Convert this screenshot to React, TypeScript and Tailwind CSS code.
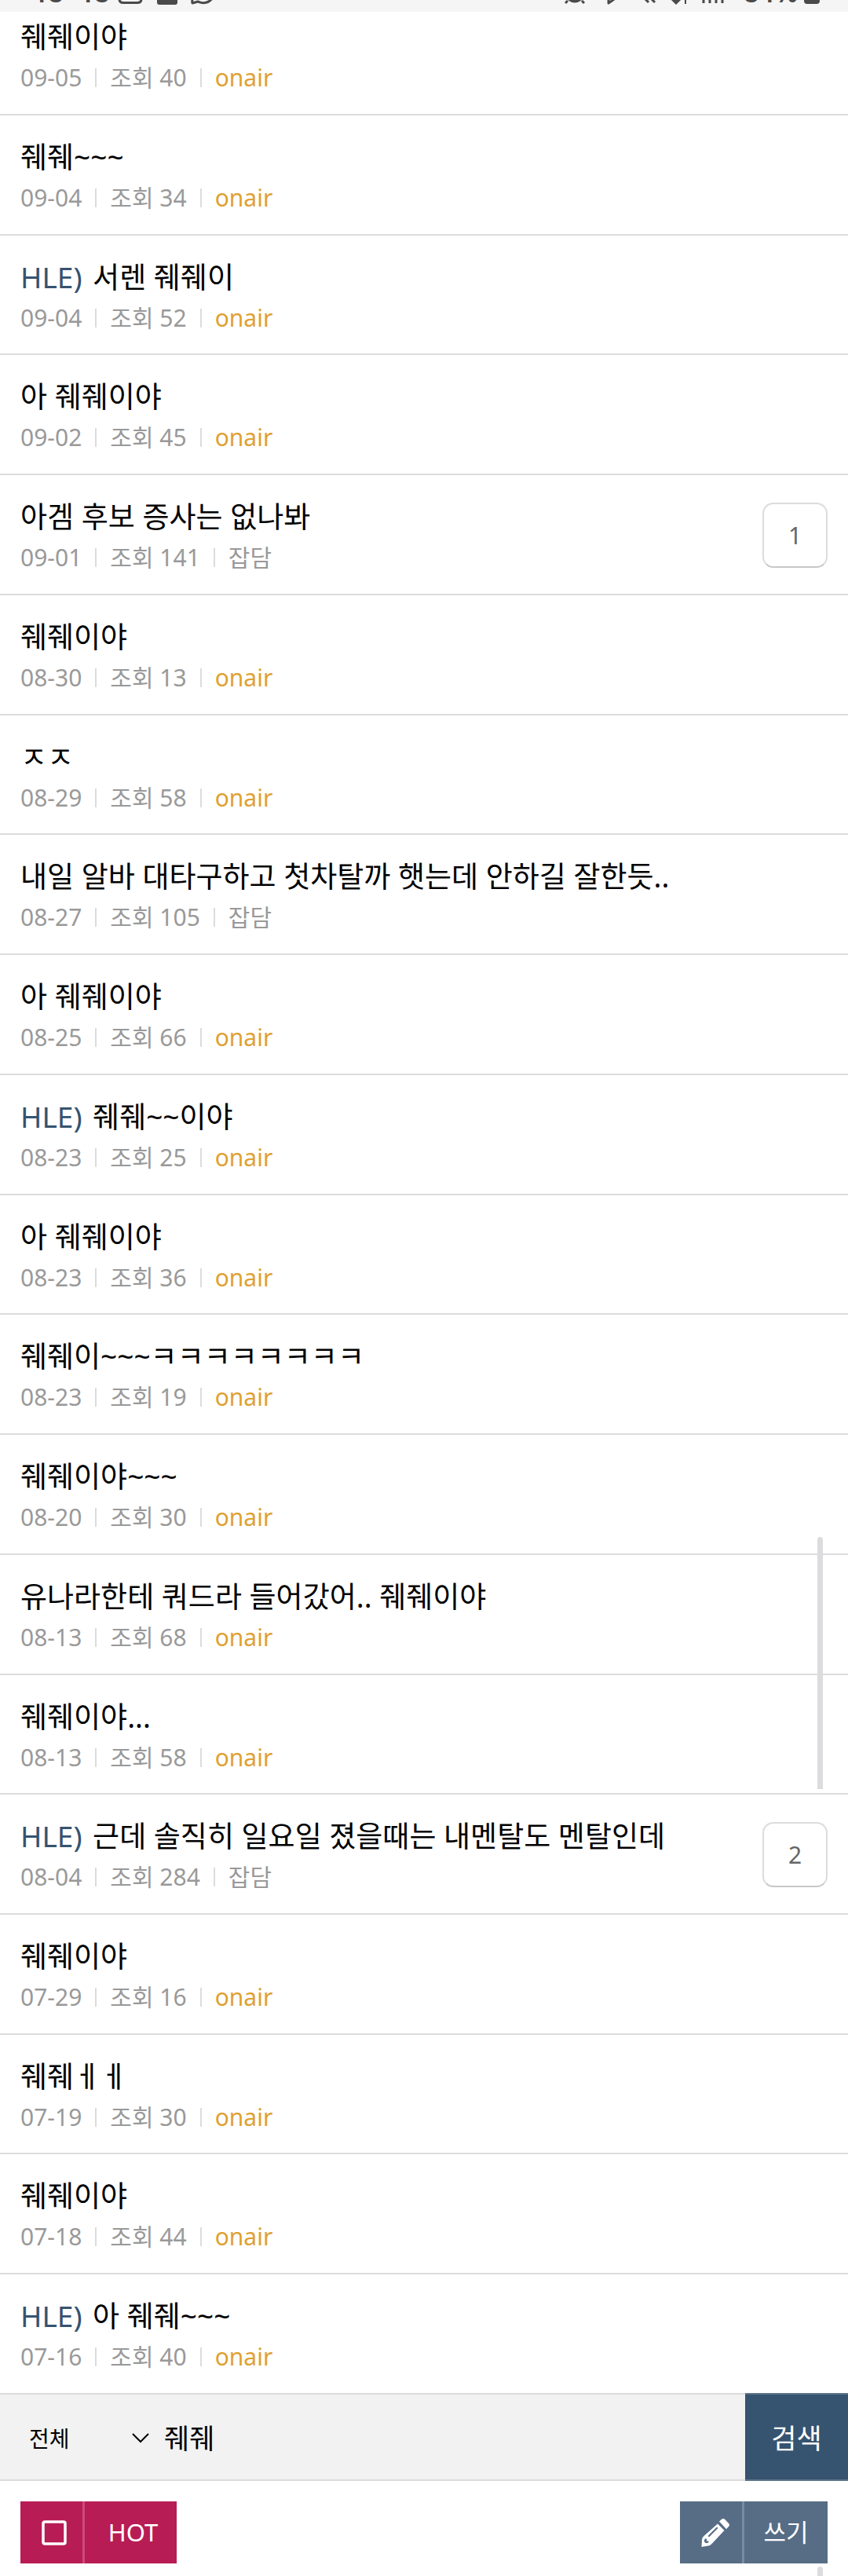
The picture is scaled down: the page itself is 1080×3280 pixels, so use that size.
import React, { useState } from 'react';

type Post = {
  id: number;
  prefix?: string;
  title: string;
  date: string;
  views: number;
  category: 'onair' | '잡담';
  comments?: number;
};

const POSTS: Post[] = [
  { id: 1, title: '줴줴이야', date: '09-05', views: 40, category: 'onair' },
  { id: 2, title: '줴줴~~~', date: '09-04', views: 34, category: 'onair' },
  { id: 3, prefix: 'HLE)', title: '서렌 줴줴이', date: '09-04', views: 52, category: 'onair' },
  { id: 4, title: '아 줴줴이야', date: '09-02', views: 45, category: 'onair' },
  { id: 5, title: '아겜 후보 증사는 없나봐', date: '09-01', views: 141, category: '잡담', comments: 1 },
  { id: 6, title: '줴줴이야', date: '08-30', views: 13, category: 'onair' },
  { id: 7, title: 'ㅈㅈ', date: '08-29', views: 58, category: 'onair' },
  { id: 8, title: '내일 알바 대타구하고 첫차탈까 햇는데 안하길 잘한듯..', date: '08-27', views: 105, category: '잡담' },
  { id: 9, title: '아 줴줴이야', date: '08-25', views: 66, category: 'onair' },
  { id: 10, prefix: 'HLE)', title: '줴줴~~이야', date: '08-23', views: 25, category: 'onair' },
  { id: 11, title: '아 줴줴이야', date: '08-23', views: 36, category: 'onair' },
  { id: 12, title: '줴줴이~~~ㅋㅋㅋㅋㅋㅋㅋㅋ', date: '08-23', views: 19, category: 'onair' },
  { id: 13, title: '줴줴이야~~~', date: '08-20', views: 30, category: 'onair' },
  { id: 14, title: '유나라한테 쿼드라 들어갔어.. 줴줴이야', date: '08-13', views: 68, category: 'onair' },
  { id: 15, title: '줴줴이야...', date: '08-13', views: 58, category: 'onair' },
  { id: 16, prefix: 'HLE)', title: '근데 솔직히 일요일 졌을때는 내멘탈도 멘탈인데', date: '08-04', views: 284, category: '잡담', comments: 2 },
  { id: 17, title: '줴줴이야', date: '07-29', views: 16, category: 'onair' },
  { id: 18, title: '줴줴ㅔㅔ', date: '07-19', views: 30, category: 'onair' },
  { id: 19, title: '줴줴이야', date: '07-18', views: 44, category: 'onair' },
  { id: 20, prefix: 'HLE)', title: '아 줴줴~~~', date: '07-16', views: 40, category: 'onair' },
];

function StatusBar() {
  return (
    <header className="h-[15px] shrink-0 overflow-hidden bg-[#f5f5f5] pl-[42px] pr-9 flex items-start justify-between text-[#4a4a4a]">
      <div className="flex items-start">
        <div className="-mt-[33px] flex gap-5 text-[34px] leading-[46px] font-semibold">
          <span>18</span>
          <span>18</span>
        </div>
        <svg className="ml-2 h-[15px] w-32" viewBox="0 0 128 15" fill="none" stroke="currentColor" strokeWidth="3">
          <path d="M4 -8V-1Q4 3.5 9 3.5H27Q32 3.5 32 -1V-8" />
          <path d="M52 -8V3Q52 6 55 6H75Q78 6 78 3V-8Z" fill="currentColor" stroke="none" />
          <path d="M99 -5Q96 0 97 4L104 2Q116 7 123 -3" strokeLinejoin="round" />
        </svg>
      </div>
      <div className="flex items-start">
        <svg className="mr-5 h-[15px] w-52" viewBox="0 0 208 15" fill="none" stroke="currentColor" strokeWidth="3">
          <path d="M1 4L4 1M25 4L22 1" />
          <path d="M4 0Q13 7 22 0Z" fill="currentColor" stroke="none" />
          <path d="M56 -8V4L66 -3" strokeLinejoin="round" />
          <path d="M101 -3L107 3M109 -3L115 3" />
          <path d="M137 -1L142 4L147 -1M142 -8V4" />
          <path d="M154 -8V5" strokeWidth="2" />
          <path d="M177 -8V4M185 -8V4M193 -8V4M201 -8V4" />
        </svg>
        <span className="-mt-[33px] text-[34px] leading-[46px] font-semibold">84%</span>
        <svg className="ml-2 h-[15px] w-5" viewBox="0 0 20 15" fill="currentColor">
          <path d="M0 -5H20V1Q20 5 16 5H4Q0 5 0 1Z" />
        </svg>
      </div>
    </header>
  );
}

function Divider() {
  return <span className="h-6 w-0.5 bg-[#dcdcdc]" />;
}

function PostRow({ post }: { post: Post }) {
  return (
    <li className="flex flex-1 items-start justify-between border-b-2 border-[#dcdcdc] px-[26px] pt-[29px] first:flex-none first:pt-2 first:pb-[26px]">
      <a href={`#post-${post.id}`} className="min-w-0 flex-1">
        <h2 className="text-[37px] leading-[48px] break-words text-black">
          {post.prefix && <span className="mr-1 text-[#36536f]">{post.prefix} </span>}
          {post.title}
        </h2>
        <div className="mt-2 flex items-center gap-[17px] text-[30px] leading-[40px] text-[#999]">
          <span>{post.date}</span>
          <Divider />
          <span>조회 {post.views}</span>
          <Divider />
          {post.category === 'onair' ? (
            <span className="text-[#e0a030]">onair</span>
          ) : (
            <span>{post.category}</span>
          )}
        </div>
      </a>
      {post.comments && (
        <a
          href={`#comments-${post.id}`}
          className="mt-1.5 flex h-[83px] w-[83px] shrink-0 items-center justify-center rounded-[14px] border-2 border-[#dcdcdc] border-b-[#c8c8c8] text-[30px] text-[#666]"
        >
          {post.comments}
        </a>
      )}
    </li>
  );
}

function SearchBar() {
  const [scope, setScope] = useState('all');
  const [keyword, setKeyword] = useState('줴줴');

  return (
    <form
      className="flex h-[110px] shrink-0 items-stretch bg-[#f2f2f2]"
      onSubmit={(e) => e.preventDefault()}
    >
      <div className="relative w-[209px] border-b-2 border-[#dcdcdc]">
        <select
          aria-label="검색 범위"
          value={scope}
          onChange={(e) => setScope(e.target.value)}
          className="h-full w-full appearance-none bg-transparent pt-1 pl-[37px] text-[28px] text-black outline-none"
        >
          <option value="all">전체</option>
          <option value="title">제목</option>
          <option value="body">내용</option>
        </select>
        <svg
          className="pointer-events-none absolute right-[18px] top-12 h-3.5 w-6"
          viewBox="0 0 24 14"
          fill="none"
          stroke="#000"
          strokeWidth="2"
        >
          <path d="M2 2L12 12L22 2" />
        </svg>
      </div>
      <input
        type="text"
        aria-label="검색어"
        value={keyword}
        onChange={(e) => setKeyword(e.target.value)}
        className="min-w-0 flex-1 border-b-2 border-[#dcdcdc] bg-transparent pt-1 text-[35px] text-black outline-none"
      />
      <button
        type="submit"
        className="relative -mt-0.5 w-[131px] shrink-0 border-y-2 border-[#5e7488] bg-[#36536f] pt-1 text-[35px] text-white"
      >
        검색
      </button>
    </form>
  );
}

export default function App() {
  return (
    <div className="relative flex min-h-screen flex-col overflow-hidden bg-white font-['Noto_Sans','Noto_Sans_CJK_KR',sans-serif]">
      <StatusBar />

      <ul className="flex flex-1 flex-col">
        {POSTS.map((post) => (
          <PostRow key={post.id} post={post} />
        ))}
      </ul>

      <SearchBar />

      <footer className="flex shrink-0 items-start justify-between px-[26px] pt-[26px] pb-4">
        <button className="flex h-[79px] items-stretch bg-[#b81c54] text-[31px] text-white">
          <span className="flex w-[79px] items-center justify-center pl-1.5">
            <svg className="h-8 w-8" viewBox="0 0 32 32" fill="none" stroke="currentColor" strokeWidth="3.5">
              <rect x="2" y="2" width="28" height="28" rx="2" />
            </svg>
          </span>
          <span className="flex w-[120px] items-center justify-center border-l-3 border-[#cb4a78] pl-1.5">HOT</span>
        </button>
        <button className="flex h-[79px] items-stretch bg-[#576d86] text-[31px] text-white">
          <span className="flex w-[79px] items-center justify-center pl-2.5">
            <svg className="h-9 w-9" viewBox="0 0 36 36" fill="currentColor">
              <path d="M23 3.5L26 0.8Q28.5 -0.8 30.5 1.2L35 6Q36.8 8 35 10L32 13.3Z" />
              <path
                fillRule="evenodd"
                d="M21 6.5L29.5 15L14 31.5Q12 34 9 34.5L0.5 36L1 26.5Q1.2 24 3.5 22ZM20 10.5L8.5 22L10 23.5L21.5 12ZM5 25.5Q3 28 4.5 30Q6 32 9 30.5L10 28.5L7 28.5L7 25.5Z"
              />
            </svg>
          </span>
          <span className="flex w-[109px] items-center justify-center border-l-3 border-[#798ca3]">쓰기</span>
        </button>
      </footer>

      {/* scroll thumbs float above the list */}
      <div className="pointer-events-none absolute right-8 top-[1957px] h-[321px] w-[7px] rounded-t-full bg-[#dcdcde]" />
      <div className="pointer-events-none absolute right-8 bottom-0 h-3 w-[7px] rounded-t-full bg-[#dcdcde]" />
    </div>
  );
}
